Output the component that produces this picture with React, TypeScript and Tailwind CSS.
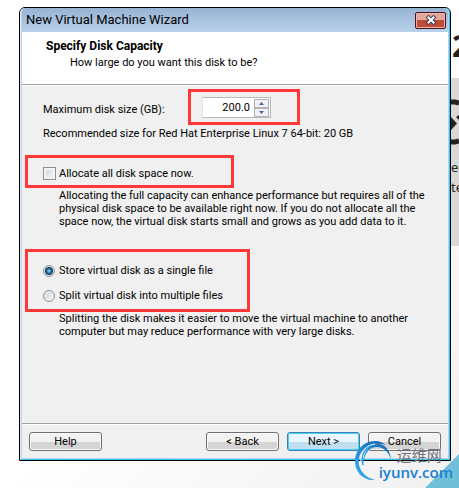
import type { ReactNode } from "react";

const Outlined = ({ className, children }: { className: string; children: ReactNode }) => (
    <div className={"border-3 border-[#fe3737] " + className}>{children}</div>
)

const FooterButton = ({ primary, children }: { primary?: boolean; children: ReactNode }) => (
    <button
        type="button"
        className={
            "h-[19px] w-[73px] rounded-[3px] border text-center leading-[17px] " +
            (primary
                ? "border-[#3c7fb1] bg-linear-to-b from-[#eaf6fd] from-50% to-[#bfdfee] to-50% shadow-[inset_0_0_0_1px_#48d0f5]"
                : "border-[#707070] bg-linear-to-b from-[#f2f2f2] from-50% to-[#d4d4d4] to-50% shadow-[inset_0_0_0_1px_#f8f8f8]")
        }
    >
        {children}
    </button>
)

const StepButton = ({ up }: { up?: boolean }) => (
    <button
        type="button"
        aria-label={up ? "Increase" : "Decrease"}
        className="flex h-[9px] w-[15px] items-center justify-center border border-[#b4b4b8] bg-[#f0f0f2]"
    >
        <svg width="5" height="3" viewBox="0 0 5 3">
            <path d={up ? "M0 3 2.5 0 5 3Z" : "M0 0h5L2.5 3Z"} fill="#4a63b0" />
        </svg>
    </button>
)

const Watermark = () => (
    <div className="absolute right-[6px] bottom-[7px] flex items-end">
        <svg width="38" height="40" viewBox="0 0 38 40" className="-mr-[14px]">
            <defs>
                <linearGradient id="swirl" x1="0" y1="1" x2="1" y2="0">
                    <stop offset="0" stopColor="#35b3ee" />
                    <stop offset="1" stopColor="#0f5fb0" />
                </linearGradient>
            </defs>
            <path d="M20 39C8 40 0 31 0 20 0 9 9 0 20 0c5 0 8 2 11 4C25 2 18 2 12 6 5 10 3 17 4 24c2 8 8 13 16 15Z" fill="url(#swirl)" />
            <path d="M8 24C5 14 10 5 20 4" fill="none" stroke="#2a9ae0" strokeWidth="1.5" />
            <path d="M9 22C7 11 15 2 24 3c7 1 11 7 12 15C33 10 28 6 22 6 14 6 9 13 9 22Z" fill="url(#swirl)" />
            <path d="M7 26C3 15 9 4 20 3" fill="none" stroke="#e8f4fb" strokeWidth="1" />
        </svg>
        <div className="flex flex-col">
            <span className="pl-[18px] font-['Noto_Sans_CJK_SC',sans-serif] text-[15px] leading-[18px] text-[#74747c]">运维网</span>
            <span className="font-['Open_Sans',sans-serif] text-[15px] leading-[17px] font-semibold text-[#1b7fd0]">iyunv.com</span>
        </div>
    </div>
)

export default function App() {
    return (
        <div className="relative flex min-h-screen items-start overflow-hidden bg-linear-to-br from-white from-50% to-[#f0f0f0] pl-[19px] font-[Roboto,sans-serif] text-[11px] leading-[13px] text-black">
            <div className="mt-[7px] min-w-0 flex-1 rounded-t-md border border-black bg-[#b9d1ea]">
                <div className="rounded-t-[5px] border-r border-b border-l border-r-[#35c5ee] border-b-[#35c5ee] border-l-[#e4eef8] px-px pb-px">
                    <header className="flex h-6 items-center justify-between rounded-t-[5px] bg-linear-to-b from-[#97b3d3] to-[#b9d1ea] pr-[2px] pl-1">
                        <h1 className="text-[13px] leading-4">New Virtual Machine Wizard</h1>
                        <button type="button" aria-label="Close" className="flex h-[17px] w-[31px] items-center justify-center rounded-[2px] border border-[#4a1420] bg-linear-to-b from-[#e5a79c] from-45% to-[#c04a35] to-50% shadow-[inset_0_0_0_1px_#e9b3a8]">
                            <svg width="12" height="10" viewBox="0 0 12 10">
                                <path d="M3.5 2.5 8.5 7.5M8.5 2.5 3.5 7.5" stroke="#3b4357" strokeWidth="4" strokeLinecap="square" />
                                <path d="M3.5 2.5 8.5 7.5M8.5 2.5 3.5 7.5" stroke="#fff" strokeWidth="2" strokeLinecap="square" />
                            </svg>
                        </button>
                    </header>
                    <main className="bg-[#f0f0f0]">
                        <div className="h-[52px] bg-white pt-2 pl-6">
                            <h2 className="text-[12px] leading-[13px] font-bold">Specify Disk Capacity</h2>
                            <p className="pt-[3px] pl-6">How large do you want this disk to be?</p>
                        </div>
                        <form className="border-y border-t-[#a0a0a0] border-b-[#a0a0a0] shadow-[inset_0_1px_0_#fff,0_1px_0_#fff]">
                            <div className="flex items-center pt-1 pl-[21px]">
                                <label htmlFor="disk-size" className="w-[145px] pt-1">Maximum disk size (GB):</label>
                                <Outlined className="flex h-9 w-28 items-center pt-px pl-[11px]">
                                    <div className="flex h-[21px] w-[69px] items-center border border-[#b8b8bc] border-l-[#e2e3ea] bg-white pr-px">
                                        <input id="disk-size" defaultValue="200.0" className="w-full min-w-0 flex-1 bg-white pr-1 text-right outline-none" />
                                        <div className="flex flex-col">
                                            <StepButton up />
                                            <StepButton />
                                        </div>
                                    </div>
                                </Outlined>
                            </div>
                            <p className="pt-[2px] pl-[21px]">Recommended size for Red Hat Enterprise Linux 7 64-bit: 20 GB</p>
                            <div className="pt-[15px] pl-[3px]">
                                <Outlined className="flex h-[33px] w-[209px] items-center pt-[3px] pl-[15px]">
                                    <label className="flex items-center gap-[3px]">
                                        <input type="checkbox" className="size-[13px] appearance-none border border-[#8e8f8f] bg-linear-to-br from-[#cfd3d8] to-[#f8f8f8] shadow-[inset_0_0_0_2px_#f4f4f4]" />
                                        Allocate all disk space now.
                                    </label>
                                </Outlined>
                            </div>
                            <p className="pt-px pl-[37px]">
                                Allocating the full capacity can enhance performance but requires all of the<br />
                                physical disk space to be available right now. If you do not allocate all the<br />
                                space now, the virtual disk starts small and grows as you add data to it.
                            </p>
                            <div className="pt-[21px] pl-[3px]">
                                <Outlined className="flex h-[63px] w-[225px] flex-col justify-center gap-3 pt-[5px] pl-[15px]">
                                    <label className="flex items-center gap-1">
                                        <input type="radio" name="split" defaultChecked className="size-[12px] appearance-none rounded-full border border-[#8e8f8f] bg-[#f4f4f4] checked:bg-radial checked:from-[#5cc0e8] checked:from-10% checked:via-[#0b3a5c] checked:via-50% checked:to-[#f4f4f4] checked:to-65%" />
                                        Store virtual disk as a single file
                                    </label>
                                    <label className="flex items-center gap-1">
                                        <input type="radio" name="split" className="size-[12px] appearance-none rounded-full border border-[#8e8f8f] bg-linear-to-br from-[#cfd3d8] to-[#f8f8f8] shadow-[inset_0_0_0_1px_#f4f4f4]" />
                                        Split virtual disk into multiple files
                                    </label>
                                </Outlined>
                            </div>
                            <p className="pl-[37px] pb-[85px]">
                                Splitting the disk makes it easier to move the virtual machine to another<br />
                                computer but may reduce performance with very large disks.
                            </p>
                        </form>
                        <footer className="flex gap-2 pt-2 pr-[7px] pb-[7px] pl-[7px]">
                            <FooterButton>Help</FooterButton>
                            <div className="flex-1" />
                            <FooterButton>&lt; Back</FooterButton>
                            <FooterButton primary>Next &gt;</FooterButton>
                            <FooterButton>Cancel</FooterButton>
                        </footer>
                    </main>
                </div>
            </div>
            <aside className="w-2 shrink-0 overflow-hidden font-['Noto_Sans',sans-serif] text-[#222]">
                <p className="h-[78px] pt-[26px] pl-px text-[30px] leading-10 font-bold">2</p>
                <div className="h-[168px] bg-[#d8d8d8] pt-[21px]">
                    <svg width="8" height="46" viewBox="0 0 8 46" fill="none" stroke="#222" strokeWidth="5">
                        <path d="M0 3h4l4 1M0 43h4l4-1" />
                        <path d="M0 18v13l6-6.500ZM8 16l-3 2 3 3Z" fill="#222" stroke="none" />
                    </svg>
                    <p className="pt-3 text-[13px] leading-5">ec<br />te</p>
                </div>
            </aside>
            <svg className="absolute right-0 bottom-0" width="34" height="34" viewBox="0 0 34 34">
                <path d="M34 0V34H0Z" fill="#6fbfd8" />
            </svg>
            <Watermark />
        </div>
    )
}
